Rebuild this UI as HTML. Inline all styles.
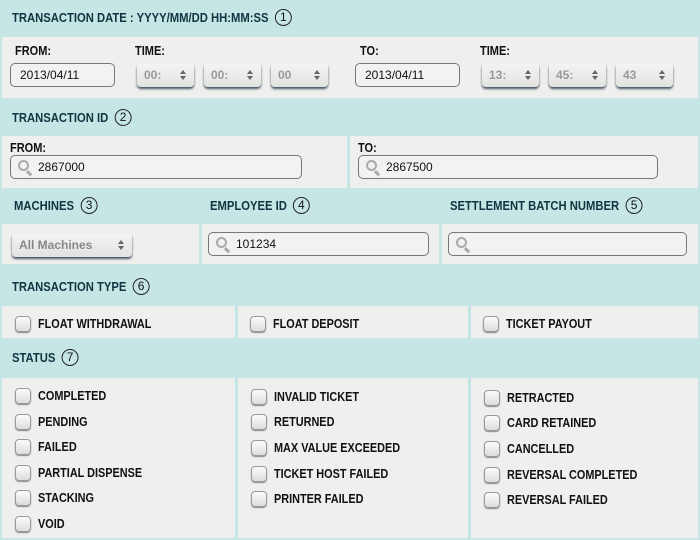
<!DOCTYPE html>
<html><head><meta charset="utf-8"><style>
*{box-sizing:border-box;margin:0;padding:0}
body{width:700px;height:540px;background:#c6e6e6;position:relative;overflow:hidden;font-family:"Liberation Sans",sans-serif;font-weight:bold}
.a{position:absolute}
.c{position:absolute;background:#efefee}
.h{position:absolute;color:#0f3640;font-size:12.5px;white-space:nowrap;transform:scaleX(0.9);transform-origin:0 0}
.n{display:inline-block;width:17px;height:17px;border:1.3px solid #222;border-radius:50%;text-align:center;font-weight:normal;font-family:"Liberation Sans",sans-serif;font-size:12px;line-height:15px;color:#111;margin-left:8px;vertical-align:middle;position:relative;top:-1px;transform:scaleX(1.11)}
.l{position:absolute;font-size:12.5px;color:#111;transform:scaleX(0.88);transform-origin:0 0}
.in{position:absolute;height:24px;border:1px solid #777;border-radius:5px;background:#f2f2f2;font-family:"Liberation Sans",sans-serif;font-weight:normal;font-size:12px;color:#111;padding:4px 0 0 9px}
.sel{position:absolute;height:24px;border-radius:4px;background:linear-gradient(#f4f4f2,#e2e2e0);box-shadow:0 2px 2px #456;font-size:12px;color:#999;padding:5px 0 0 7px;font-family:"Liberation Sans",sans-serif}
.sel:after{content:"";position:absolute;right:8px;top:7px;border:3.5px solid transparent;border-bottom:4px solid #666;border-top:none}
.sel:before{content:"";position:absolute;right:8px;top:13px;border:3.5px solid transparent;border-top:4px solid #666;border-bottom:none}
.s{padding-left:27px}
.mg{position:absolute;left:7px;top:4px;width:11px;height:11px;border:2px solid #aaa;border-radius:50%}
.mg:after{content:"";position:absolute;left:8px;top:8px;width:6px;height:2.5px;background:#aaa;transform:rotate(45deg);transform-origin:0 0}
.cb{position:absolute;font-size:12.5px;color:#111;padding-left:23px;line-height:14px;white-space:nowrap}
.cb span{display:inline-block;transform:scaleX(0.87);transform-origin:0 0}
.cb:before{content:"";position:absolute;left:0;top:-1px;width:14px;height:14px;border:1px solid #999;border-radius:4px;background:linear-gradient(#fbfbfb,#ddd);box-shadow:0 1px 1px #888}
</style></head><body>
<div class="h" style="left:12px;top:10px">TRANSACTION DATE : YYYY/MM/DD HH:MM:SS<span class="n">1</span></div>
<div class="c" style="left:2px;top:37px;width:696px;height:61px"></div>
<div class="l" style="left:15px;top:44px">FROM:</div>
<div class="l" style="left:135px;top:44px">TIME:</div>
<div class="l" style="left:360px;top:44px">TO:</div>
<div class="l" style="left:480px;top:44px">TIME:</div>
<div class="in" style="left:10px;top:63px;width:105px">2013/04/11</div>
<div class="in" style="left:355px;top:63px;width:105px">2013/04/11</div>
<div class="sel" style="left:137px;top:63px;width:57px">00:</div>
<div class="sel" style="left:204px;top:63px;width:57px">00:</div>
<div class="sel" style="left:271px;top:63px;width:57px">00</div>
<div class="sel" style="left:482px;top:63px;width:57px">13:</div>
<div class="sel" style="left:549px;top:63px;width:57px">45:</div>
<div class="sel" style="left:616px;top:63px;width:57px">43</div>

<div class="h" style="left:12px;top:110px">TRANSACTION ID<span class="n">2</span></div>
<div class="c" style="left:2px;top:136px;width:345px;height:52px"></div>
<div class="c" style="left:350px;top:136px;width:348px;height:52px"></div>
<div class="l" style="left:10px;top:141px">FROM:</div>
<div class="l" style="left:358px;top:141px">TO:</div>
<div class="in s" style="left:10px;top:155px;width:292px"><span class="mg"></span>2867000</div>
<div class="in s" style="left:358px;top:155px;width:300px"><span class="mg"></span>2867500</div>

<div class="h" style="left:14px;top:198px">MACHINES<span class="n">3</span></div>
<div class="h" style="left:210px;top:198px">EMPLOYEE ID<span class="n">4</span></div>
<div class="h" style="left:450px;top:198px">SETTLEMENT BATCH NUMBER<span class="n">5</span></div>
<div class="c" style="left:2px;top:224px;width:197px;height:40px"></div>
<div class="c" style="left:202px;top:224px;width:237px;height:40px"></div>
<div class="c" style="left:442px;top:224px;width:256px;height:40px"></div>
<div class="sel" style="left:12px;top:233px;width:120px;color:#888">All Machines</div>
<div class="in s" style="left:208px;top:232px;width:221px"><span class="mg"></span>101234</div>
<div class="in s" style="left:448px;top:232px;width:239px"><span class="mg"></span></div>

<div class="h" style="left:12px;top:279px">TRANSACTION TYPE<span class="n">6</span></div>
<div class="c" style="left:2px;top:306px;width:233px;height:32px"></div>
<div class="c" style="left:238px;top:306px;width:230px;height:32px"></div>
<div class="c" style="left:471px;top:306px;width:227px;height:32px"></div>
<div class="cb" style="left:15px;top:317px"><span>FLOAT WITHDRAWAL</span></div>
<div class="cb" style="left:250px;top:317px"><span>FLOAT DEPOSIT</span></div>
<div class="cb" style="left:483px;top:317px"><span>TICKET PAYOUT</span></div>

<div class="h" style="left:12px;top:350px">STATUS<span class="n">7</span></div>
<div class="c" style="left:2px;top:378px;width:233px;height:160px"></div>
<div class="c" style="left:238px;top:378px;width:230px;height:160px"></div>
<div class="c" style="left:471px;top:378px;width:227px;height:160px"></div>
<div class="cb" style="left:15px;top:389px"><span>COMPLETED</span></div>
<div class="cb" style="left:15px;top:415px"><span>PENDING</span></div>
<div class="cb" style="left:15px;top:440px"><span>FAILED</span></div>
<div class="cb" style="left:15px;top:466px"><span>PARTIAL DISPENSE</span></div>
<div class="cb" style="left:15px;top:491px"><span>STACKING</span></div>
<div class="cb" style="left:15px;top:517px"><span>VOID</span></div>
<div class="cb" style="left:251px;top:390px"><span>INVALID TICKET</span></div>
<div class="cb" style="left:251px;top:415px"><span>RETURNED</span></div>
<div class="cb" style="left:251px;top:441px"><span>MAX VALUE EXCEEDED</span></div>
<div class="cb" style="left:251px;top:467px"><span>TICKET HOST FAILED</span></div>
<div class="cb" style="left:251px;top:492px"><span>PRINTER FAILED</span></div>
<div class="cb" style="left:484px;top:391px"><span>RETRACTED</span></div>
<div class="cb" style="left:484px;top:416px"><span>CARD RETAINED</span></div>
<div class="cb" style="left:484px;top:442px"><span>CANCELLED</span></div>
<div class="cb" style="left:484px;top:468px"><span>REVERSAL COMPLETED</span></div>
<div class="cb" style="left:484px;top:493px"><span>REVERSAL FAILED</span></div>
</body></html>
